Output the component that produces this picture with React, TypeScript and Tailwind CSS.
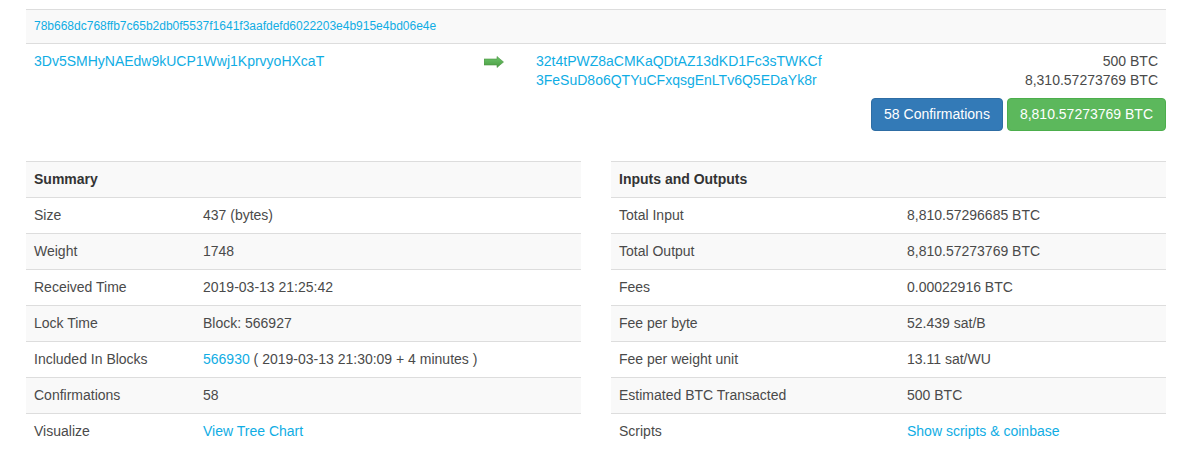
import React from 'react';

const summary = [
  { label: 'Size', value: '437 (bytes)' },
  { label: 'Weight', value: '1748' },
  { label: 'Received Time', value: '2019-03-13 21:25:42' },
  { label: 'Lock Time', value: 'Block: 566927' },
  { label: 'Included In Blocks', value: 'block' },
  { label: 'Confirmations', value: '58' },
  { label: 'Visualize', value: 'link', link: 'View Tree Chart' },
];

const io = [
  { label: 'Total Input', value: '8,810.57296685 BTC' },
  { label: 'Total Output', value: '8,810.57273769 BTC' },
  { label: 'Fees', value: '0.00022916 BTC' },
  { label: 'Fee per byte', value: '52.439 sat/B' },
  { label: 'Fee per weight unit', value: '13.11 sat/WU' },
  { label: 'Estimated BTC Transacted', value: '500 BTC' },
  { label: 'Scripts', value: 'link', link: 'Show scripts & coinbase' },
];

const outputs = [
  { addr: '32t4tPWZ8aCMKaQDtAZ13dKD1Fc3sTWKCf', amount: '500 BTC' },
  { addr: '3FeSuD8o6QTYuCFxqsgEnLTv6Q5EDaYk8r', amount: '8,310.57273769 BTC' },
];

const Arrow = () => (
  <svg width="20" height="12" viewBox="0 0 20 12">
    <defs>
      <linearGradient id="ag" x1="0" y1="0" x2="0" y2="1">
        <stop offset="0" stopColor="#6cc46a" />
        <stop offset="1" stopColor="#4b9c43" />
      </linearGradient>
    </defs>
    <path d="M0 3h13V0.5L19.5 6 13 11.5V9H0z" fill="url(#ag)" stroke="#4a9442" strokeWidth="0.6" />
  </svg>
);

interface Row {
  label: string;
  value: string;
  link?: string;
}

const InfoTable: React.FC<{ title: string; rows: Row[]; labelWidth: string }> = ({ title, rows, labelWidth }) => (
  <div className="w-[555px] leading-[19px]">
    <div className="border-t border-[#ddd] bg-[#f9f9f9] px-2 py-2 font-bold text-[#333]">{title}</div>
    {rows.map((row, i) => (
      <div key={row.label} className={`flex border-t border-[#ddd] ${i % 2 === 1 ? 'bg-[#f9f9f9]' : 'bg-white'}`}>
        <div className={`${labelWidth} shrink-0 px-2 py-2`}>{row.label}</div>
        <div className="flex-1 px-2 py-2">
          {row.value === 'block' ? (
            <>
              <span className="text-[#10ade4]">566930</span> ( 2019-03-13 21:30:09 + 4 minutes )
            </>
          ) : row.value === 'link' ? (
            <span className="text-[#10ade4]">{row.link}</span>
          ) : (
            row.value
          )}
        </div>
      </div>
    ))}
  </div>
);

export default function App() {
  return (
    <div className="w-[1184px] min-h-[468px] bg-white pl-[26px] pt-[9px] font-['Liberation_Sans',Arial,sans-serif] text-[14px] leading-[20px] text-[#4a4a4a]">
      <div className="w-[1140px]">
        <div className="border-t border-[#ddd] bg-[#f9f9f9] px-2 py-2 text-[12px] leading-[17px] text-[#10ade4]">
          78b668dc768ffb7c65b2db0f5537f1641f3aafdefd6022203e4b915e4bd06e4e
        </div>
        <div className="flex border-t border-[#ddd]">
          <div className="w-[450px] px-2 py-2 leading-[19px] text-[#10ade4]">3Dv5SMHyNAEdw9kUCP1Wwj1KprvyoHXcaT</div>
          <div className="w-[52px] px-2 pt-[12px]">
            <Arrow />
          </div>
          <div className="flex-1 px-2 py-2 leading-[19px]">
            {outputs.map((o) => (
              <div key={o.addr} className="flex justify-between">
                <span className="text-[#10ade4]">{o.addr}</span>
                <span>{o.amount}</span>
              </div>
            ))}
          </div>
        </div>
        <div className="flex justify-end gap-[4px]">
          <span className="rounded-[4px] border border-[#2e6da4] bg-[#337ab7] px-3 py-[6px] leading-[19px] text-white">58 Confirmations</span>
          <span className="rounded-[4px] border border-[#4cae4c] bg-[#5cb85c] px-3 py-[6px] leading-[19px] text-white">8,810.57273769 BTC</span>
        </div>
        <div className="mt-[30px] flex gap-[30px]">
          <InfoTable title="Summary" rows={summary} labelWidth="w-[169px]" />
          <InfoTable title="Inputs and Outputs" rows={io} labelWidth="w-[288px]" />
        </div>
      </div>
    </div>
  );
}
